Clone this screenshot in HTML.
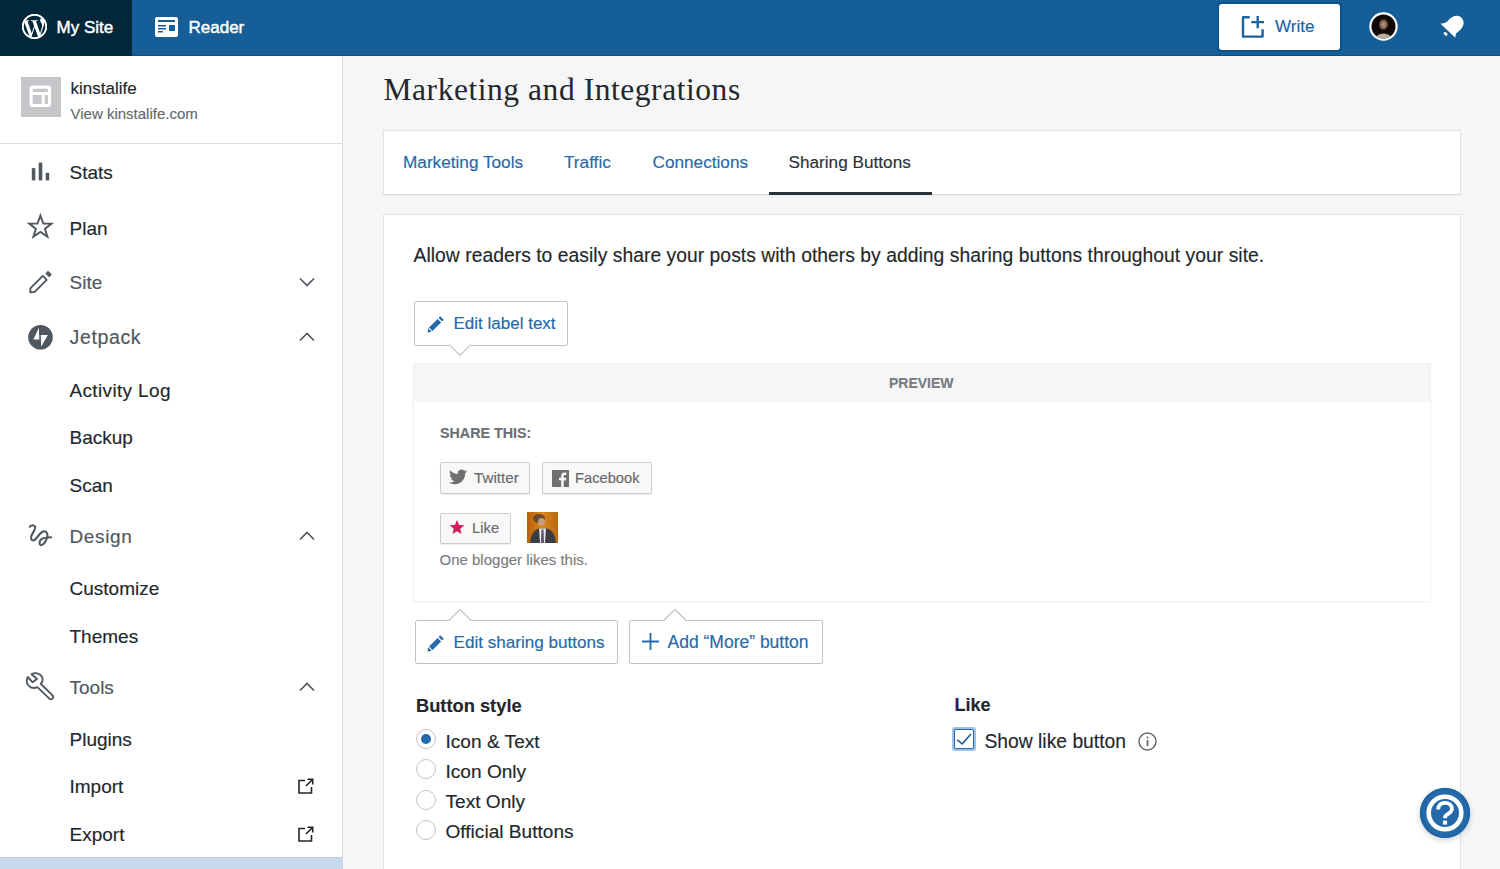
<!DOCTYPE html>
<html><head><meta charset="utf-8"><title>Marketing and Integrations</title>
<style>
html,body{margin:0;padding:0;width:1500px;height:869px;overflow:hidden;background:#f6f6f6;font-family:"Liberation Sans",sans-serif;}
.t{position:absolute;white-space:nowrap;line-height:1;-webkit-text-stroke:0.15px currentColor;}
svg{display:block}
</style></head><body>
<div style="position:absolute;left:0;top:0;width:1500px;height:56px;background:#155e97"></div>
<div style="position:absolute;left:0;top:55px;width:1500px;height:1px;background:#0f4f84"></div>
<div style="position:absolute;left:0;top:0;width:132px;height:56px;background:#03273a"></div>
<svg style="position:absolute;left:22px;top:14px" width="25" height="25" viewBox="0 0 24 24"><path fill="#fff" d="M21.469 6.825c.84 1.537 1.318 3.3 1.318 5.175 0 3.979-2.156 7.456-5.363 9.325l3.295-9.527c.615-1.54.82-2.771.82-3.864 0-.405-.026-.78-.07-1.11m-7.981.105c.647-.03 1.232-.105 1.232-.105.582-.075.514-.93-.067-.899 0 0-1.755.135-2.88.135-1.064 0-2.85-.15-2.85-.15-.585-.03-.661.855-.075.885 0 0 .54.061 1.125.09l1.68 4.605-2.37 7.08L5.354 6.9c.649-.03 1.234-.1 1.234-.1.585-.075.516-.93-.065-.896 0 0-1.746.138-2.874.138-.2 0-.438-.008-.69-.015C4.911 3.150 8.235 1.215 12 1.215c2.809 0 5.365 1.072 7.286 2.833-.046-.003-.091-.009-.141-.009-1.060 0-1.812.923-1.812 1.914 0 .89.513 1.643 1.060 2.531.411.72.89 1.643.89 2.977 0 .915-.354 1.994-.821 3.479l-1.075 3.585-3.9-11.61.001.014zM12 22.784c-1.059 0-2.081-.153-3.048-.437l3.237-9.406 3.315 9.087c.024.053.05.101.078.149-1.12.393-2.325.609-3.582.609M1.211 12c0-1.564.336-3.05.935-4.39L7.29 21.709C3.694 19.96 1.212 16.271 1.211 12M12 0C5.385 0 0 5.385 0 12s5.385 12 12 12 12-5.385 12-12S18.615 0 12 0"/><circle cx="12" cy="12" r="11.15" fill="none" stroke="#fff" stroke-width="1.7"/></svg>
<div class="t" style="left:56.5px;top:18.6px;font-size:17px;color:#fff;font-weight:400;font-family:'Liberation Sans',sans-serif;-webkit-text-stroke:0.45px #fff">My Site</div>
<svg style="position:absolute;left:155px;top:17px" width="23" height="20" viewBox="0 0 23 20"><rect x="0" y="0" width="23" height="20" rx="2" fill="#fff"/><rect x="3" y="3" width="17" height="2" fill="#155e97"/><rect x="3" y="8" width="8" height="1.5" fill="#155e97"/><rect x="3" y="11" width="8" height="1.5" fill="#155e97"/><rect x="3" y="14" width="5" height="1.5" fill="#155e97"/><rect x="14" y="8" width="6" height="6" fill="#155e97"/></svg>
<div class="t" style="left:188.5px;top:18.6px;font-size:17px;color:#fff;font-weight:400;font-family:'Liberation Sans',sans-serif;-webkit-text-stroke:0.45px #fff">Reader</div>
<div style="position:absolute;left:1217px;top:2px;width:125px;height:50px;border-radius:4px;background:#0f5189"></div>
<div style="position:absolute;left:1219px;top:4px;width:121px;height:46px;border-radius:3px;background:#fff"></div>
<svg style="position:absolute;left:1236px;top:10px" width="34" height="34" viewBox="0 0 34 34" fill="none" stroke="#1b62a0" stroke-width="2.4"><path d="M13.7 7.2H7V26.6H26.6V19.2" stroke-linejoin="round"/><path d="M21.7 5.9V18.2M15.3 12.1H28"/></svg>
<div class="t" style="left:1275.0px;top:18.3px;font-size:17px;color:#1b62a0;font-weight:400;font-family:'Liberation Sans',sans-serif;">Write</div>
<svg style="position:absolute;left:1369px;top:12px" width="29" height="29" viewBox="0 0 29 29"><defs><clipPath id="avc"><circle cx="14.5" cy="14.5" r="12"/></clipPath><radialGradient id="fg" cx="0.5" cy="0.5" r="0.5"><stop offset="0" stop-color="#b89a86"/><stop offset="0.6" stop-color="#8a6a58"/><stop offset="1" stop-color="#1a0f0a"/></radialGradient></defs><circle cx="14.5" cy="14.5" r="14.2" fill="#fff"/><g clip-path="url(#avc)"><rect width="29" height="29" fill="#100806"/><ellipse cx="14.5" cy="12.5" rx="5" ry="6" fill="url(#fg)"/><ellipse cx="14.5" cy="27" rx="8" ry="5.5" fill="#b7aa9a"/></g></svg>
<svg style="position:absolute;left:1435px;top:10px" width="34" height="34" viewBox="0 0 34 34"><path fill="#fff" d="M5.5 13.7L20.3 27.8C20.4 26.2 20.6 24.6 21.2 23.2C24 21.5 28.2 18 28.6 13.6C29 9.2 25.4 5.6 21.2 5.8C17 6 14.2 9.8 11.6 12.1C9.6 13.2 7.6 13.5 5.5 13.7Z"/><ellipse cx="10.6" cy="23.9" rx="2.1" ry="1.5" transform="rotate(40 10.6 23.9)" fill="#fff"/></svg>
<div style="position:absolute;left:0;top:56px;width:342px;height:813px;background:#fff"></div>
<div style="position:absolute;left:342px;top:56px;width:1px;height:813px;background:#dcdcde"></div>
<div style="position:absolute;left:0;top:143px;width:342px;height:1px;background:#dcdcde"></div>
<div style="position:absolute;left:21px;top:77px;width:40px;height:40px;background:#c5c5ca"></div>
<svg style="position:absolute;left:16px;top:72px" width="50" height="50" viewBox="16 72 50 50"><rect x="29.5" y="85.5" width="21.6" height="21.6" rx="3" fill="#fff"/><rect x="32.7" y="88.7" width="15.2" height="3.4" fill="#c5c5ca"/><rect x="32.7" y="95" width="8.9" height="9" fill="#c5c5ca"/><rect x="44.8" y="95" width="3.1" height="9" fill="#c5c5ca"/></svg>
<div class="t" style="left:70.5px;top:80.3px;font-size:17px;color:#22272b;font-weight:400;font-family:'Liberation Sans',sans-serif;">kinstalife</div>
<div class="t" style="left:70.5px;top:105.6px;font-size:15px;color:#646970;font-weight:400;font-family:'Liberation Sans',sans-serif;">View kinstalife.com</div>
<svg style="position:absolute;left:24px;top:155px" width="34" height="34" viewBox="24 155 34 34" fill="#50575e"><rect x="31.8" y="168.1" width="3.5" height="12.3"/><rect x="38.7" y="162.6" width="3.6" height="17.8"/><rect x="45.7" y="172.8" width="3.5" height="7.6"/></svg>
<div class="t" style="left:69.5px;top:162.9px;font-size:19px;color:#22272b;font-weight:400;font-family:'Liberation Sans',sans-serif;">Stats</div>
<svg style="position:absolute;left:24px;top:210px" width="34" height="34" viewBox="0 0 34 34" fill="none" stroke="#50575e" stroke-width="1.9" stroke-linejoin="miter"><path d="M16.4 5.6L19.3 13.6H27.5L20.9 18.9L23.4 26.6L16.4 21.9L9.4 26.6L11.9 18.9L5.3 13.6H13.5Z"/></svg>
<div class="t" style="left:69.5px;top:218.6px;font-size:19px;color:#22272b;font-weight:400;font-family:'Liberation Sans',sans-serif;">Plan</div>
<svg style="position:absolute;left:24px;top:265px" width="34" height="34" viewBox="0 0 34 34" fill="none" stroke="#50575e" stroke-width="1.9" stroke-linejoin="round"><path d="M6.2 27.3L6.5 23.2L18.8 10.9L22.7 14.8L10.4 27.1Z"/><path d="M21.3 8.4L24 5.7L27.9 9.6L25.2 12.3Z" fill="#50575e" stroke="none"/></svg>
<div class="t" style="left:69.5px;top:273.2px;font-size:19px;color:#50575e;font-weight:400;font-family:'Liberation Sans',sans-serif;">Site</div>
<svg style="position:absolute;left:299px;top:277px" width="16" height="10" viewBox="0 0 16 10" fill="none" stroke="#50575e" stroke-width="1.7"><path d="M1 1.5l7 7 7-7"/></svg>
<svg style="position:absolute;left:24px;top:320px" width="34" height="34" viewBox="0 0 34 34"><circle cx="16.5" cy="17.2" r="12.3" fill="#50575e"/><path fill="#fff" d="M14.9 7.8L9.4 19.6H15.3Z M16.8 15.1H23.9L17.2 26.6Z"/></svg>
<div class="t" style="left:69.5px;top:328.1px;font-size:19.6px;color:#50575e;font-weight:400;font-family:'Liberation Sans',sans-serif;letter-spacing:0.6px">Jetpack</div>
<svg style="position:absolute;left:299px;top:332px" width="16" height="10" viewBox="0 0 16 10" fill="none" stroke="#50575e" stroke-width="1.7"><path d="M1 8.5l7-7 7 7"/></svg>
<div class="t" style="left:69.5px;top:380.9px;font-size:19px;color:#22272b;font-weight:400;font-family:'Liberation Sans',sans-serif;letter-spacing:0.35px">Activity Log</div>
<div class="t" style="left:69.5px;top:428.2px;font-size:19px;color:#22272b;font-weight:400;font-family:'Liberation Sans',sans-serif;">Backup</div>
<div class="t" style="left:69.5px;top:475.9px;font-size:19px;color:#22272b;font-weight:400;font-family:'Liberation Sans',sans-serif;">Scan</div>
<svg style="position:absolute;left:24px;top:518px" width="34" height="34" viewBox="0 0 34 34" fill="none" stroke="#50575e" stroke-width="2.1" stroke-linecap="round" stroke-linejoin="round"><path d="M5.8 8.8C6.8 7 9.6 6.4 11 8.6C12.3 10.8 8.3 14.8 7.3 18.3C6.3 21.8 8.6 23.6 11 21.6C13.5 19.5 15.5 15.2 18.5 13.7C21.5 12.2 23.8 14.5 23.4 17.6C23 21 21 25.8 18.2 26.8C15.3 27.8 14.5 24.2 16.8 21.7C18.8 19.6 23 19.3 27.2 19.3"/></svg>
<div class="t" style="left:69.5px;top:526.9px;font-size:19px;color:#50575e;font-weight:400;font-family:'Liberation Sans',sans-serif;letter-spacing:0.65px">Design</div>
<svg style="position:absolute;left:299px;top:531px" width="16" height="10" viewBox="0 0 16 10" fill="none" stroke="#50575e" stroke-width="1.7"><path d="M1 8.5l7-7 7 7"/></svg>
<div class="t" style="left:69.5px;top:578.6px;font-size:19px;color:#22272b;font-weight:400;font-family:'Liberation Sans',sans-serif;">Customize</div>
<div class="t" style="left:69.5px;top:626.6px;font-size:19px;color:#22272b;font-weight:400;font-family:'Liberation Sans',sans-serif;">Themes</div>
<svg style="position:absolute;left:22px;top:668px" width="36" height="36" viewBox="0 0 36 36" fill="none" stroke="#50575e" stroke-width="1.9" stroke-linejoin="round"><path d="M9.6 6.2C13 4.3 17.8 5 19.8 8.4C21.1 10.8 20.6 13.9 18.7 15.8L30.8 27.6C31.5 28.3 31.5 29.3 30.8 30L30 30.8C29.3 31.5 28.3 31.5 27.6 30.8L15.4 19.1C12.5 20.5 9 20 6.8 17.8C4.8 15.8 4.3 12.1 5.8 9L10.6 14.3L15 11Z"/></svg>
<div class="t" style="left:69.5px;top:677.6px;font-size:19px;color:#50575e;font-weight:400;font-family:'Liberation Sans',sans-serif;">Tools</div>
<svg style="position:absolute;left:299px;top:682px" width="16" height="10" viewBox="0 0 16 10" fill="none" stroke="#50575e" stroke-width="1.7"><path d="M1 8.5l7-7 7 7"/></svg>
<div class="t" style="left:69.5px;top:729.6px;font-size:19px;color:#22272b;font-weight:400;font-family:'Liberation Sans',sans-serif;">Plugins</div>
<div class="t" style="left:69.5px;top:777.2px;font-size:19px;color:#22272b;font-weight:400;font-family:'Liberation Sans',sans-serif;">Import</div>
<svg style="position:absolute;left:298px;top:778px" width="16" height="16" viewBox="0 0 16 16" fill="none" stroke="#22272b" stroke-width="1.6"><path d="M7 2.5H1v12.5h12.5V9"/><path d="M8 8l6.5-6.5M9.5 1.3h5.2v5.2"/></svg>
<div class="t" style="left:69.5px;top:824.7px;font-size:19px;color:#22272b;font-weight:400;font-family:'Liberation Sans',sans-serif;">Export</div>
<svg style="position:absolute;left:298px;top:825.5px" width="16" height="16" viewBox="0 0 16 16" fill="none" stroke="#22272b" stroke-width="1.6"><path d="M7 2.5H1v12.5h12.5V9"/><path d="M8 8l6.5-6.5M9.5 1.3h5.2v5.2"/></svg>
<div style="position:absolute;left:0;top:857px;width:344px;height:12px;background:#c8d9ee;border-top:1px solid #bccfe2;box-sizing:border-box"></div>
<div style="position:absolute;left:343px;top:56px;width:1157px;height:813px;background:#f6f6f6"></div>
<div class="t" style="left:383.5px;top:74.4px;font-size:31.5px;color:#23282d;font-weight:400;font-family:'Liberation Serif',serif;letter-spacing:0.55px;-webkit-text-stroke:0px">Marketing and Integrations</div>
<div style="position:absolute;left:383px;top:130px;width:1078px;height:65px;background:#fff;border:1px solid #e4e4e6;border-bottom-color:#d8d8da;box-sizing:border-box;box-shadow:0 1px 2px rgba(0,0,0,0.04)"></div>
<div class="t" style="left:403.0px;top:154.4px;font-size:17.2px;color:#2469a9;font-weight:400;font-family:'Liberation Sans',sans-serif;">Marketing Tools</div>
<div class="t" style="left:564.0px;top:154.4px;font-size:17.2px;color:#2469a9;font-weight:400;font-family:'Liberation Sans',sans-serif;">Traffic</div>
<div class="t" style="left:652.5px;top:154.4px;font-size:17.2px;color:#2469a9;font-weight:400;font-family:'Liberation Sans',sans-serif;">Connections</div>
<div class="t" style="left:788.5px;top:154.4px;font-size:17.2px;color:#2c3338;font-weight:400;font-family:'Liberation Sans',sans-serif;">Sharing Buttons</div>
<div style="position:absolute;left:769px;top:192px;width:163px;height:3px;background:#2c3338"></div>
<div style="position:absolute;left:383px;top:214px;width:1078px;height:700px;background:#fff;border:1px solid #e2e4e7;box-sizing:border-box"></div>
<div class="t" style="left:413.5px;top:246.3px;font-size:19.3px;color:#22272b;font-weight:400;font-family:'Liberation Sans',sans-serif;letter-spacing:0.04px">Allow readers to easily share your posts with others by adding sharing buttons throughout your site.</div>
<div style="position:absolute;left:414px;top:301px;width:154px;height:45px;background:#fff;border:1px solid #c3c4c7;border-radius:2px;box-sizing:border-box"></div>
<svg style="position:absolute;left:449px;top:344px" width="22" height="13" viewBox="0 0 22 13"><path d="M0 0.5L11 11.5 22 0.5" fill="#fff" stroke="#c3c4c7" stroke-width="1.2"/><rect x="1" y="-1" width="20" height="1.5" fill="#fff"/></svg>
<svg style="position:absolute;left:427px;top:315px" width="18" height="18" viewBox="0 0 18 18" fill="#2469a9"><path d="M13.2 1.3l3.5 3.5-1.6 1.6-3.5-3.5zM10.6 3.9l3.5 3.5-8.6 8.6-3.5-3.5zM1.3 13.3l3.4 3.4-4.2 0.8z"/></svg>
<div class="t" style="left:453.5px;top:315.4px;font-size:17px;color:#2469a9;font-weight:400;font-family:'Liberation Sans',sans-serif;">Edit label text</div>
<div style="position:absolute;left:414px;top:364px;width:1016px;height:237px;background:#fff;box-shadow:0 0 0 1px #f1f1f1, 0 1px 3px rgba(0,0,0,0.05)"></div>
<div style="position:absolute;left:414px;top:364px;width:1016px;height:38px;background:#f6f6f6"></div>
<div class="t" style="left:889.0px;top:375.8px;font-size:14px;color:#787c82;font-weight:700;font-family:'Liberation Sans',sans-serif;">PREVIEW</div>
<div class="t" style="left:440.0px;top:425.6px;font-size:14.3px;color:#6c7075;font-weight:700;font-family:'Liberation Sans',sans-serif;">SHARE THIS:</div>
<div style="position:absolute;left:440px;top:461.5px;width:90px;height:32px;background:#f8f8f8;border:1px solid #cccccc;border-radius:2px;box-sizing:border-box;box-shadow:0 1px 1px rgba(0,0,0,0.08)"></div>
<svg style="position:absolute;left:449px;top:469px" width="18" height="16" viewBox="0 0 24 20"><path fill="#707070" d="M24 2.4c-.9.4-1.8.6-2.8.8 1-.6 1.8-1.6 2.2-2.7-1 .6-2 1-3.1 1.2C19.4.7 18.1 0 16.6 0c-2.7 0-4.9 2.2-4.9 4.9 0 .4 0 .8.1 1.1C7.7 5.8 4.1 3.9 1.7.9c-.4.7-.7 1.6-.7 2.5 0 1.7.9 3.2 2.2 4.1-.8 0-1.6-.2-2.2-.6v.1c0 2.4 1.7 4.4 3.9 4.8-.4.1-.8.2-1.3.2-.3 0-.6 0-.9-.1.6 2 2.4 3.4 4.6 3.4-1.7 1.3-3.8 2.1-6.1 2.1-.4 0-.8 0-1.2-.1 2.2 1.4 4.8 2.2 7.5 2.2 9.1 0 14-7.5 14-14v-.6c1-.7 1.8-1.6 2.5-2.5z"/></svg>
<div class="t" style="left:474.0px;top:470.0px;font-size:15.2px;color:#646970;font-weight:400;font-family:'Liberation Sans',sans-serif;">Twitter</div>
<div style="position:absolute;left:541.5px;top:461.5px;width:110px;height:32px;background:#f8f8f8;border:1px solid #cccccc;border-radius:2px;box-sizing:border-box;box-shadow:0 1px 1px rgba(0,0,0,0.08)"></div>
<svg style="position:absolute;left:551.5px;top:469.5px" width="17" height="17" viewBox="0 0 17 17"><rect width="17" height="17" fill="#707070"/><path fill="#f8f8f8" d="M11.7 17v-6.6h2.2l.3-2.6h-2.5V6.2c0-.7.2-1.3 1.3-1.3h1.3V2.6c-.2 0-1-.1-1.9-.1-1.9 0-3.2 1.2-3.2 3.3v1.9H7v2.6h2.2V17z"/></svg>
<div class="t" style="left:575.0px;top:470.5px;font-size:14.7px;color:#646970;font-weight:400;font-family:'Liberation Sans',sans-serif;">Facebook</div>
<div style="position:absolute;left:440px;top:512.5px;width:71px;height:31.5px;background:#f8f8f8;border:1px solid #cccccc;border-radius:2px;box-sizing:border-box;box-shadow:0 1px 1px rgba(0,0,0,0.08)"></div>
<svg style="position:absolute;left:449px;top:520px" width="16" height="15" viewBox="0 0 24 23"><path fill="#d11c5a" d="M12 0l3.1 7.6 8.2.6-6.3 5.3 2 8-7-4.3-7 4.3 2-8L.7 8.2l8.2-.6z"/></svg>
<div class="t" style="left:472.0px;top:521.4px;font-size:14.8px;color:#646970;font-weight:400;font-family:'Liberation Sans',sans-serif;">Like</div>
<svg style="position:absolute;left:526.5px;top:512px" width="31" height="31" viewBox="0 0 31 31"><defs><linearGradient id="ag" x1="0" y1="0" x2="1" y2="0"><stop offset="0" stop-color="#b8600c"/><stop offset="0.5" stop-color="#d9861c"/><stop offset="1" stop-color="#b86a14"/></linearGradient></defs><rect width="31" height="31" fill="url(#ag)"/><ellipse cx="12" cy="6.5" rx="6" ry="4.5" fill="#6b4a2c"/><ellipse cx="14.5" cy="10" rx="3.5" ry="4" fill="#c99a78"/><path d="M3 31C4 22 7 18 12 16.5H20C25 18 28 22 29 31Z" fill="#3c3c44"/><path d="M12 16.5H19L18 31H13Z" fill="#e8e8ee"/><path d="M14.5 17.5H16.5L17 31H14Z" fill="#5e4e6a"/></svg>
<div class="t" style="left:439.5px;top:552.0px;font-size:15px;color:#787c82;font-weight:400;font-family:'Liberation Sans',sans-serif;">One blogger likes this.</div>
<div style="position:absolute;left:414.5px;top:619.5px;width:203px;height:44px;background:#fff;border:1px solid #c3c4c7;border-radius:2px;box-sizing:border-box"></div>
<svg style="position:absolute;left:449px;top:609px" width="22" height="12" viewBox="0 0 22 12"><path d="M0 11.2L11 0.5 22 11.2" fill="#fff" stroke="#c3c4c7" stroke-width="1.2"/><rect x="1" y="11" width="20" height="2" fill="#fff"/></svg>
<svg style="position:absolute;left:427px;top:633.5px" width="18" height="18" viewBox="0 0 18 18" fill="#2469a9"><path d="M13.2 1.3l3.5 3.5-1.6 1.6-3.5-3.5zM10.6 3.9l3.5 3.5-8.6 8.6-3.5-3.5zM1.3 13.3l3.4 3.4-4.2 0.8z"/></svg>
<div class="t" style="left:453.5px;top:633.8px;font-size:17.1px;color:#2469a9;font-weight:400;font-family:'Liberation Sans',sans-serif;">Edit sharing buttons</div>
<div style="position:absolute;left:628.5px;top:619.5px;width:194px;height:44px;background:#fff;border:1px solid #c3c4c7;border-radius:2px;box-sizing:border-box"></div>
<svg style="position:absolute;left:664px;top:609px" width="22" height="12" viewBox="0 0 22 12"><path d="M0 11.2L11 0.5 22 11.2" fill="#fff" stroke="#c3c4c7" stroke-width="1.2"/><rect x="1" y="11" width="20" height="2" fill="#fff"/></svg>
<svg style="position:absolute;left:641px;top:632px" width="19" height="19" viewBox="0 0 19 19" stroke="#2469a9" stroke-width="1.8"><path d="M9.5 1v17M1 9.5h17"/></svg>
<div class="t" style="left:667.5px;top:633.5px;font-size:17.5px;color:#2469a9;font-weight:400;font-family:'Liberation Sans',sans-serif;">Add “More” button</div>
<div class="t" style="left:416.0px;top:696.5px;font-size:18.3px;color:#22272b;font-weight:700;font-family:'Liberation Sans',sans-serif;">Button style</div>
<div style="position:absolute;left:416px;top:729px;width:20px;height:20px;border-radius:50%;border:1px solid #c3c4c7;box-sizing:border-box;background:#fff"></div>
<div style="position:absolute;left:421px;top:734px;width:10px;height:10px;border-radius:50%;background:#2469a9"></div>
<div class="t" style="left:445.5px;top:732.4px;font-size:19.1px;color:#22272b;font-weight:400;font-family:'Liberation Sans',sans-serif;">Icon &amp; Text</div>
<div style="position:absolute;left:416px;top:759.4px;width:20px;height:20px;border-radius:50%;border:1px solid #c3c4c7;box-sizing:border-box;background:#fff"></div>
<div class="t" style="left:445.5px;top:762.3px;font-size:19.1px;color:#22272b;font-weight:400;font-family:'Liberation Sans',sans-serif;">Icon Only</div>
<div style="position:absolute;left:416px;top:789.6px;width:20px;height:20px;border-radius:50%;border:1px solid #c3c4c7;box-sizing:border-box;background:#fff"></div>
<div class="t" style="left:445.5px;top:792.4px;font-size:19.1px;color:#22272b;font-weight:400;font-family:'Liberation Sans',sans-serif;">Text Only</div>
<div style="position:absolute;left:416px;top:819.6px;width:20px;height:20px;border-radius:50%;border:1px solid #c3c4c7;box-sizing:border-box;background:#fff"></div>
<div class="t" style="left:445.5px;top:822.4px;font-size:19.1px;color:#22272b;font-weight:400;font-family:'Liberation Sans',sans-serif;">Official Buttons</div>
<div class="t" style="left:954.5px;top:696.2px;font-size:18px;color:#22272b;font-weight:700;font-family:'Liberation Sans',sans-serif;">Like</div>
<div style="position:absolute;left:952px;top:727px;width:24px;height:24px;border-radius:3px;background:#9ec2e6"></div>
<div style="position:absolute;left:954px;top:729px;width:20px;height:20px;border:1.5px solid #2469a9;box-sizing:border-box;background:#fff;border-radius:2px"></div>
<svg style="position:absolute;left:954px;top:729px" width="20" height="20" viewBox="0 0 20 20" fill="none" stroke="#1d5f9c" stroke-width="1.6"><path d="M3.2 10.8L8.2 14.8L17 5"/></svg>
<div class="t" style="left:984.5px;top:731.9px;font-size:19.3px;color:#22272b;font-weight:400;font-family:'Liberation Sans',sans-serif;">Show like button</div>
<svg style="position:absolute;left:1137.5px;top:732px" width="19" height="19" viewBox="0 0 19 19" fill="none" stroke="#646970" stroke-width="1.5"><circle cx="9.5" cy="9.5" r="8.5"/><path d="M9.5 8v6" stroke-width="1.8"/><circle cx="9.5" cy="5.5" r="1" fill="#646970" stroke="none"/></svg>
<div style="position:absolute;left:1420px;top:788px;width:50px;height:50px;border-radius:50%;background:#2469a9;box-shadow:0 2px 6px rgba(0,0,0,0.2)"></div>
<svg style="position:absolute;left:1420px;top:788px" width="50" height="50" viewBox="0 0 50 50"><circle cx="25" cy="25" r="24" fill="none" stroke="#1c64a6" stroke-width="2"/><circle cx="25" cy="25" r="16.3" fill="none" stroke="#fff" stroke-width="4.6"/><path d="M18.2 21.5C18.2 17 21.2 14.8 25 14.8C28.8 14.8 31.9 17.2 31.9 20.8C31.9 24.6 28.4 25.6 26.4 27C25.5 27.7 25 28.6 25 30.2" fill="none" stroke="#fff" stroke-width="3.8"/><rect x="22.9" y="32.6" width="4.2" height="4" fill="#fff"/></svg>
</body></html>
